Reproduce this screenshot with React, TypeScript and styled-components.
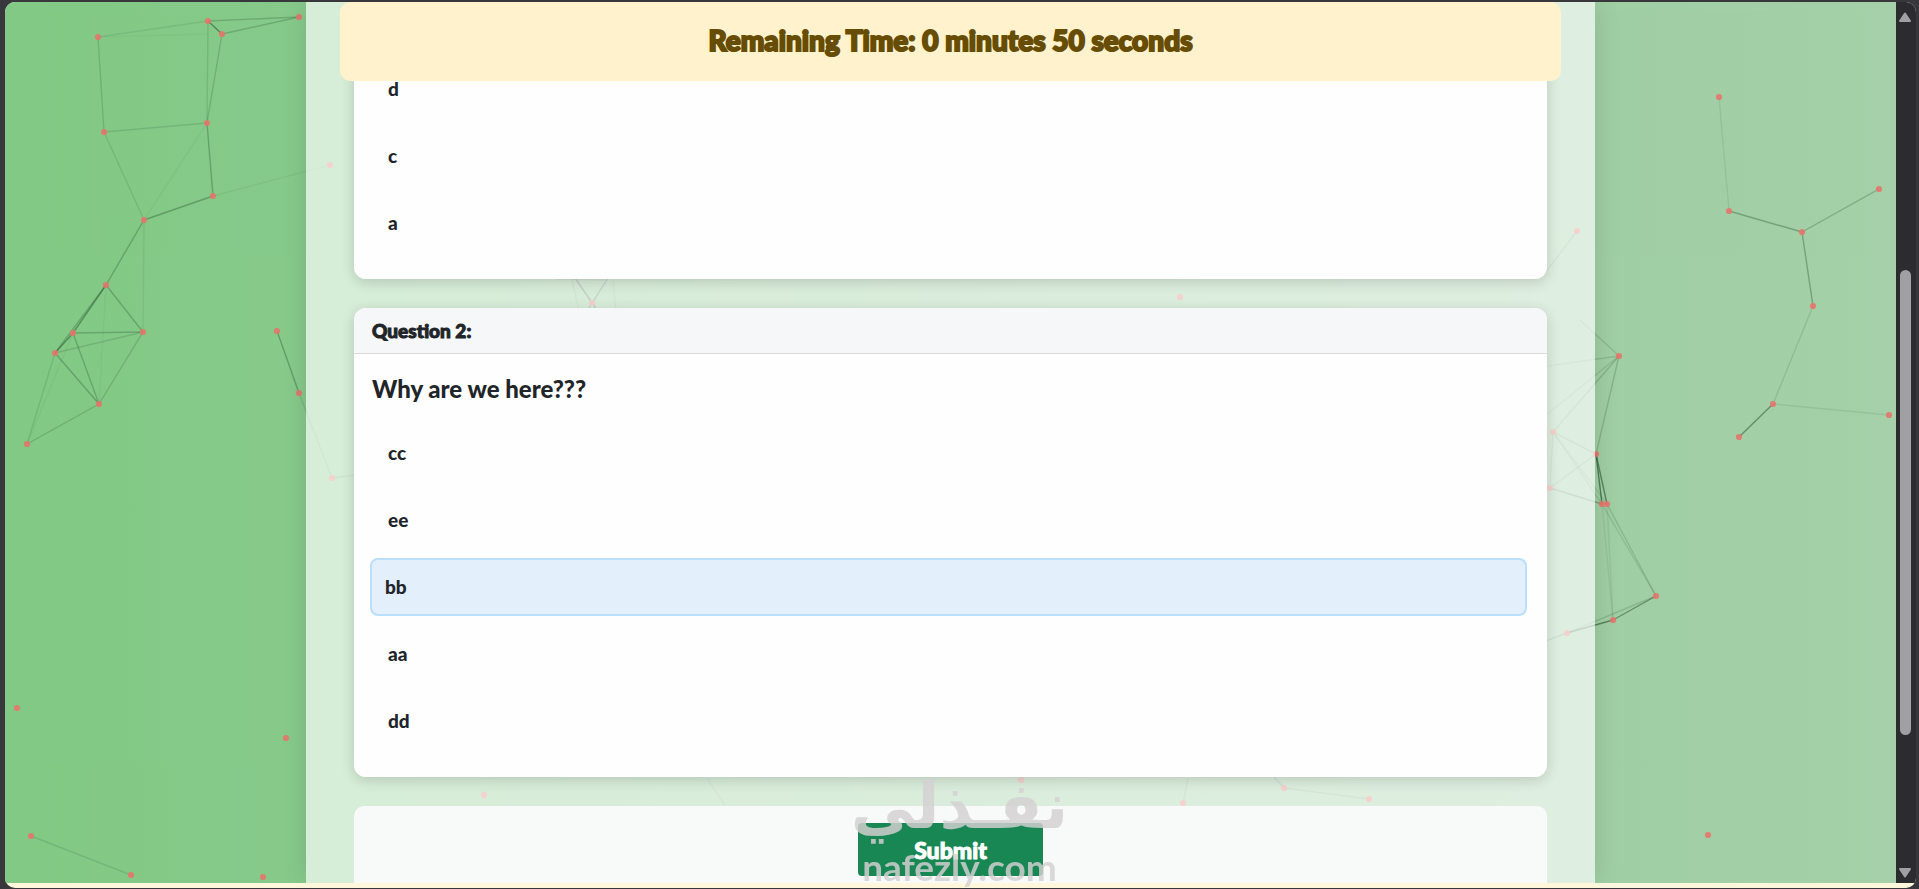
import React, { useState } from "react";
import styled, { createGlobalStyle, css } from "styled-components";

const GlobalStyle = createGlobalStyle`
  *, *::before, *::after { box-sizing: border-box; }
  body {
    margin: 0;
    background: #38373b;
    color: #212529;
    font-family: Lato, "Open Sans", sans-serif;
    font-weight: 900;
    stroke-linejoin: round;
  }
`;

const Window = styled.div`
  height: 100vh;
  padding: 2px 3px 1px 5px;
`;

const Frame = styled.div`
  display: flex;
  flex-direction: column;
  height: 100%;
  border-radius: 10px;
  overflow: hidden;
  background: #fff7dc;
  padding-bottom: 5px;
`;

const Viewport = styled.div`
  flex: 1;
  min-height: 0;
  display: flex;
`;

const Page = styled.div`
  position: relative;
  flex: 1;
  display: flex;
  justify-content: center;
  overflow: hidden;
  background: linear-gradient(90deg, #81c984 0%, #93cb98 50%, #a5d0a9 100%);
`;

const Network = styled.svg`
  position: absolute;
  inset: 0;
  width: 100%;
  height: 100%;
`;

const Panel = styled.main`
  position: relative;
  display: flex;
  flex-direction: column;
  width: 100%;
  max-width: 1289px;
  padding: 0 48px;
  background: rgba(255, 255, 255, 0.66);
  box-shadow: 0 0 24px rgba(0, 0, 0, 0.12);
`;

const Timer = styled.header`
  position: relative;
  z-index: 1;
  flex: none;
  margin: 0 -14px;
  padding: 19px 20px 21px;
  border-radius: 10px;
  background: #fff2cd;
  color: #664d03;
  font-size: 28px;
  line-height: 39px;
  text-align: center;
  -webkit-text-stroke: 2px;
`;

const Cards = styled.form`
  display: flex;
  flex-direction: column;
  gap: 29px;
  margin-top: -31px;
`;

const Card = styled.fieldset`
  min-width: 0;
  margin: 0;
  padding: 0;
  border: 0;
  border-radius: 12px;
  overflow: hidden;
  background: #fefefe;
  box-shadow: 0 3px 14px rgba(0, 0, 0, 0.16);
`;

const CardHeader = styled.h2`
  margin: 0;
  padding: 8px 18px;
  border-bottom: 1px solid #d9dbdc;
  background: #f6f7f8;
  font-size: 19px;
  font-weight: 900;
  line-height: 29px;
  -webkit-text-stroke: 1px;
`;

const Prompt = styled.p`
  margin: 0;
  padding: 18px 18px 0;
  font-size: 24px;
  line-height: 34px;
`;

const Options = styled.div<{ $first?: boolean }>`
  display: flex;
  flex-direction: column;
  gap: 9px;
  padding: ${(p) => (p.$first ? 10 : 18)}px 23px 27px 19px;
`;

const Option = styled.label<{ $selected: boolean }>`
  display: flex;
  align-items: center;
  height: 58px;
  padding: 0 15px;
  border-radius: 8px;
  font-size: 19px;
  line-height: 28px;
  cursor: pointer;
  ${(p) =>
    p.$selected &&
    css`
      margin: 0 -3px;
      padding: 0 13px;
      border: 2px solid #bbdefb;
      background: #e3f0fc;
    `}
`;

const HiddenRadio = styled.input`
  position: absolute;
  opacity: 0;
  pointer-events: none;
`;

const SubmitCard = styled.div`
  display: flex;
  justify-content: center;
  padding: 17px;
  border-radius: 10px;
  background: #f8faf9;
`;

const SubmitButton = styled.button`
  width: 185px;
  height: 53px;
  border: 0;
  border-radius: 4px;
  background: #198754;
  color: #fff;
  font: 900 23px/28px Lato, sans-serif;
  -webkit-text-stroke: 1px;
`;

const Scrollbar = styled.div`
  display: flex;
  flex-direction: column;
  align-items: center;
  width: 20px;
  padding: 10px 2px 5px 0;
  background: #2c2b2d;
`;

const Track = styled.div`
  flex: 1;
  display: flex;
  flex-direction: column;
  align-items: center;
  padding: 248px 0 133px;
`;

const Thumb = styled.div`
  flex: 1;
  width: 11px;
  border-radius: 6px;
  background: #a09fa1;
`;

const Watermark = styled.div`
  position: fixed;
  left: 0;
  right: 0;
  bottom: 0;
  display: flex;
  flex-direction: column;
  align-items: center;
  color: #d4d0d2;
  opacity: 0.83;
  pointer-events: none;
`;

const WatermarkName = styled.span`
  margin-bottom: 8px;
  font: bold 64px/64px "DejaVu Sans", sans-serif;
`;

const WatermarkDomain = styled.span`
  padding-bottom: 1px;
  font: 700 37px/42px Lato, sans-serif;
`;

type Line = [number, number, number, number, number];

const lines: Line[] = [
  [98, 37, 208, 21, 0.15],
  [98, 37, 208, 34, 0.05],
  [98, 37, 104, 132, 0.25],
  [104, 132, 207, 123, 0.22],
  [104, 132, 144, 220, 0.2],
  [207, 123, 144, 220, 0.07],
  [208, 21, 207, 123, 0.2],
  [208, 21, 222, 34, 0.75],
  [208, 21, 299, 17, 0.35],
  [222, 34, 299, 17, 0.35],
  [222, 34, 207, 123, 0.28],
  [207, 123, 213, 196, 0.45],
  [213, 196, 144, 220, 0.5],
  [213, 196, 330, 165, 0.1],
  [144, 220, 106, 285, 0.45],
  [144, 220, 143, 332, 0.12],
  [106, 285, 73, 333, 0.65],
  [106, 285, 55, 353, 0.4],
  [106, 285, 143, 332, 0.42],
  [106, 285, 99, 404, 0.07],
  [73, 333, 143, 332, 0.4],
  [73, 333, 55, 353, 0.7],
  [73, 333, 99, 404, 0.4],
  [55, 353, 143, 332, 0.25],
  [55, 353, 99, 404, 0.45],
  [55, 353, 27, 444, 0.2],
  [143, 332, 99, 404, 0.3],
  [99, 404, 27, 444, 0.3],
  [73, 333, 27, 444, 0.07],
  [277, 331, 299, 393, 0.5],
  [299, 393, 332, 478, 0.2],
  [332, 478, 370, 473, 0.3],
  [31, 836, 131, 875, 0.2],
  [575, 278, 597, 310, 0.9],
  [608, 278, 584, 316, 0.8],
  [570, 270, 579, 312, 0.25],
  [612, 270, 616, 312, 0.25],
  [555, 279, 605, 280, 0.3],
  [707, 778, 725, 805, 0.2],
  [1183, 803, 1188, 778, 0.25],
  [1284, 788, 1273, 776, 0.5],
  [1284, 788, 1369, 799, 0.25],
  [1719, 97, 1729, 211, 0.14],
  [1729, 211, 1802, 232, 0.5],
  [1802, 232, 1879, 189, 0.4],
  [1802, 232, 1813, 306, 0.5],
  [1813, 306, 1773, 404, 0.2],
  [1773, 404, 1739, 437, 0.7],
  [1773, 404, 1889, 415, 0.14],
  [1577, 231, 1545, 273, 0.3],
  [1619, 356, 1580, 320, 0.22],
  [1619, 356, 1540, 367, 0.22],
  [1619, 356, 1553, 432, 0.3],
  [1619, 356, 1540, 420, 0.22],
  [1619, 356, 1596, 454, 0.3],
  [1553, 432, 1596, 454, 0.4],
  [1553, 432, 1550, 488, 0.3],
  [1553, 432, 1602, 504, 0.2],
  [1553, 432, 1607, 504, 0.2],
  [1596, 454, 1550, 488, 0.3],
  [1596, 454, 1602, 504, 0.9],
  [1596, 454, 1607, 504, 0.8],
  [1550, 488, 1602, 504, 0.5],
  [1602, 504, 1656, 596, 0.2],
  [1607, 504, 1656, 596, 0.25],
  [1602, 504, 1613, 620, 0.12],
  [1607, 504, 1613, 620, 0.12],
  [1656, 596, 1613, 620, 0.7],
  [1656, 596, 1567, 633, 0.25],
  [1613, 620, 1567, 633, 0.8],
  [1567, 633, 1540, 643, 0.4],
];

const points: [number, number][] = [
  [98, 37], [208, 21], [222, 34], [299, 17], [207, 123], [104, 132], [213, 196],
  [144, 220], [106, 285], [73, 333], [143, 332], [55, 353], [99, 404], [27, 444],
  [277, 331], [299, 393], [330, 165], [332, 478], [17, 708], [286, 738], [31, 836],
  [131, 875], [263, 877], [592, 303], [1180, 297], [484, 795], [1021, 780],
  [1183, 803], [1284, 788], [1369, 799], [1719, 97], [1729, 211], [1802, 232],
  [1879, 189], [1813, 306], [1773, 404], [1739, 437], [1889, 415], [1577, 231],
  [1619, 356], [1553, 432], [1596, 454], [1550, 488], [1602, 504], [1607, 504],
  [1656, 596], [1613, 620], [1567, 633], [1708, 835],
];

function Particles() {
  return (
    <Network viewBox="5 2 1891 881" preserveAspectRatio="xMidYMid slice" aria-hidden="true">
      <g stroke="#2a5532" strokeWidth="1.4">
        {lines.map(([x1, y1, x2, y2, o], i) => (
          <line key={i} x1={x1} y1={y1} x2={x2} y2={y2} opacity={o * 0.75} />
        ))}
      </g>
      <g fill="#e8746c" opacity="0.88">
        {points.map(([cx, cy], i) => (
          <circle key={i} cx={cx} cy={cy} r="3.1" />
        ))}
      </g>
    </Network>
  );
}

interface OptionListProps {
  name: string;
  items: string[];
  value: string;
  first?: boolean;
  onChange: (v: string) => void;
}

function OptionList({ name, items, value, first, onChange }: OptionListProps) {
  return (
    <Options $first={first}>
      {items.map((item) => (
        <Option key={item} $selected={item === value}>
          <HiddenRadio
            type="radio"
            name={name}
            value={item}
            checked={item === value}
            onChange={() => onChange(item)}
          />
          {item}
        </Option>
      ))}
    </Options>
  );
}

export default function App() {
  const [first, setFirst] = useState("");
  const [second, setSecond] = useState("bb");

  return (
    <>
      <GlobalStyle />
      <Window>
        <Frame>
          <Viewport>
            <Page>
              <Particles />
              <Panel>
                <Timer>Remaining Time: 0 minutes 50 seconds</Timer>
                <Cards onSubmit={(e) => e.preventDefault()}>
                  <Card>
                    <OptionList name="q1" items={["d", "c", "a"]} value={first} onChange={setFirst} first />
                  </Card>
                  <Card>
                    <CardHeader>Question 2:</CardHeader>
                    <Prompt>Why are we here???</Prompt>
                    <OptionList
                      name="q2"
                      items={["cc", "ee", "bb", "aa", "dd"]}
                      value={second}
                      onChange={setSecond}
                    />
                  </Card>
                  <SubmitCard>
                    <SubmitButton type="submit">Submit</SubmitButton>
                  </SubmitCard>
                </Cards>
              </Panel>
            </Page>
            <Scrollbar aria-hidden="true">
              <svg width="12" height="10" viewBox="0 0 12 10">
                <path d="M6 1.5 11 9H1Z" fill="#a09fa1" stroke="#a09fa1" strokeWidth="2" strokeLinejoin="round" />
              </svg>
              <Track>
                <Thumb />
              </Track>
              <svg width="12" height="10" viewBox="0 0 12 10">
                <path d="M6 8.5 11 1H1Z" fill="#a09fa1" stroke="#a09fa1" strokeWidth="2" strokeLinejoin="round" />
              </svg>
            </Scrollbar>
          </Viewport>
        </Frame>
        <Watermark>
          <WatermarkName lang="ar" dir="rtl">نفـذلي</WatermarkName>
          <WatermarkDomain>nafezly.com</WatermarkDomain>
        </Watermark>
      </Window>
    </>
  );
}
